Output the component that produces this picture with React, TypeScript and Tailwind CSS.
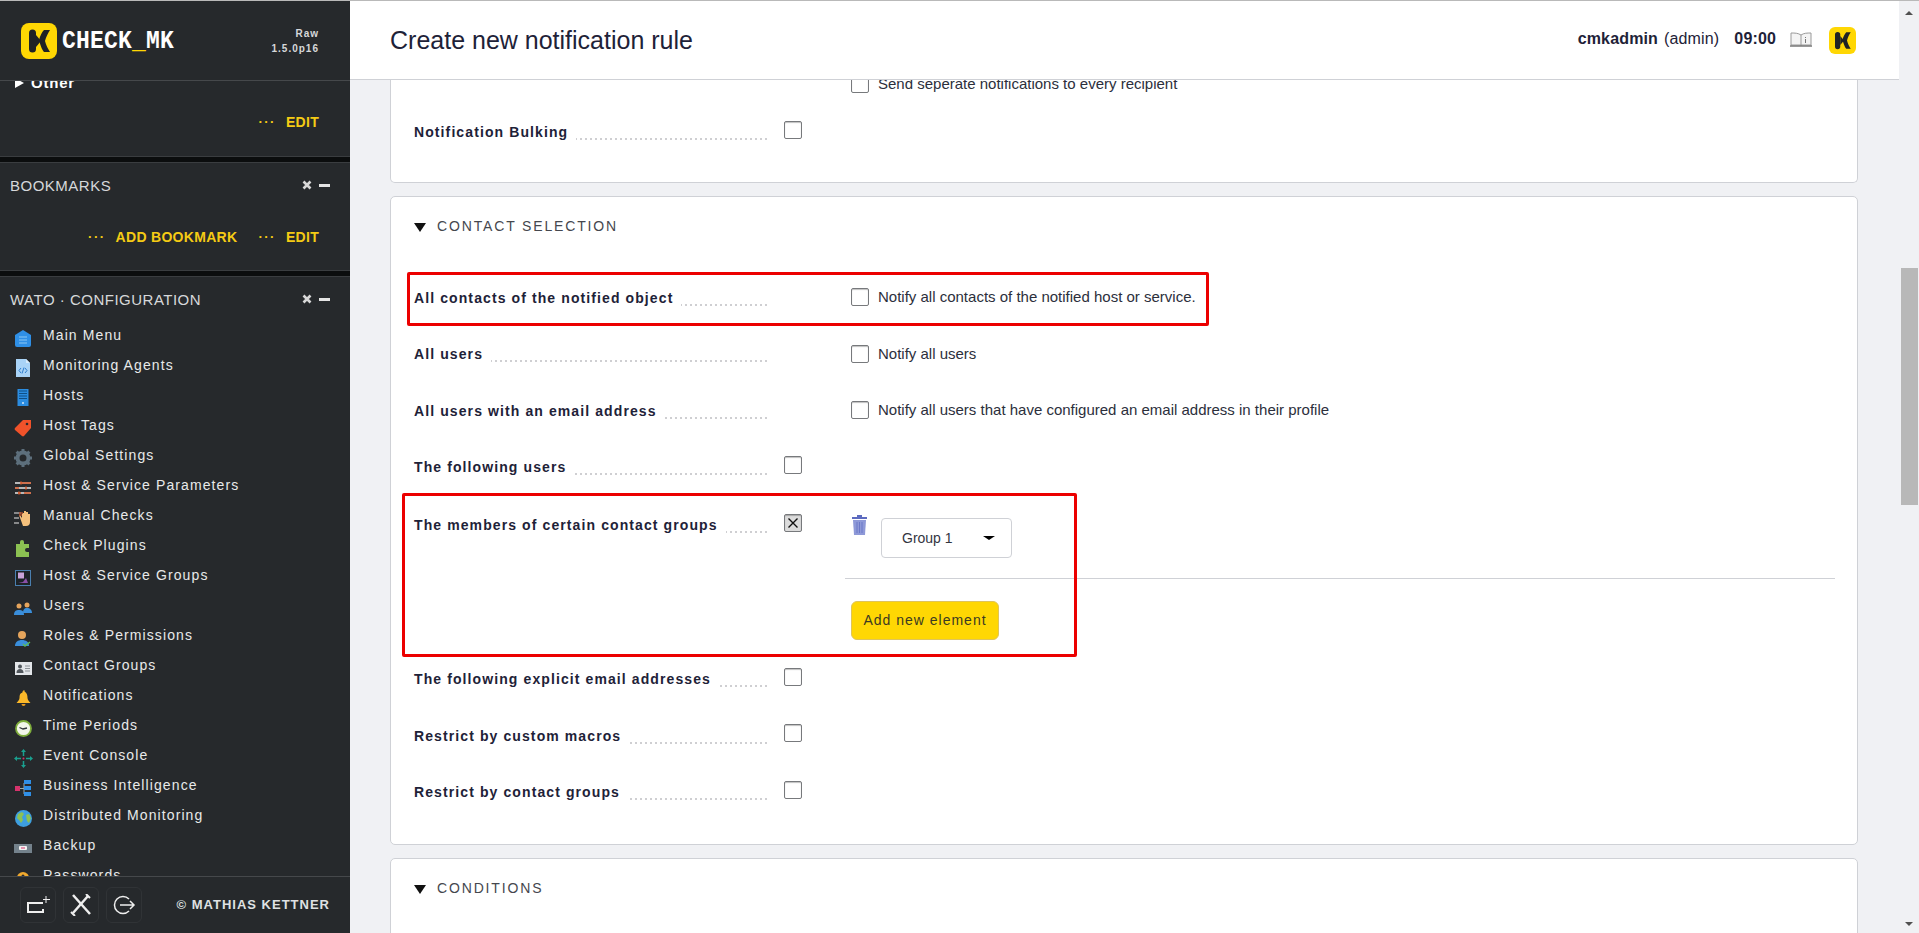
import type { ReactNode } from "react";

const sans = "font-['Liberation_Sans',Arial,sans-serif]";

function KLogo({ size }: { size: number }) {
  return (
    <svg width={size} height={size} viewBox="0 0 36 36" aria-hidden="true">
      <rect x="0" y="0" width="36" height="36" rx="8" fill="#ffd703" />
      <path d="M8 10a3.500 3.500 0 0 1 7 0v16a3.500 3.500 0 0 1-7 0z" fill="#1f2225" />
      <path d="M15 12l5 6-5 6z" fill="#1f2225" />
      <path d="M18 17c1-4 3-8 5-10h6c-2 3-4 7-5 11 1 4 3 8 5 11h-6c-2-2-4-8-5-12z" fill="#1f2225" />
    </svg>
  );
}

function IconMain() {
  return (
    <svg width="18" height="18" viewBox="0 0 18 18">
      <path d="M9 1 17 6v10a2 2 0 0 1-2 2H3a2 2 0 0 1-2-2V6z" fill="#2f8fe6" />
      <path d="M5 8h8M5 11h8M5 14h8" stroke="#8cc8f5" strokeWidth="1" />
    </svg>
  );
}
function IconAgents() {
  return (
    <svg width="18" height="20" viewBox="0 0 18 20">
      <path d="M2 1h10l4 4v14H2z" fill="#a9d3f7" />
      <path d="M12 1l4 4h-4z" fill="#d7ebfb" />
      <path d="M7 10l-2 2.500L7 15M11 10l2 2.500-2 2.500M10 9.500l-2 6" stroke="#2f7fd0" strokeWidth="1" fill="none" />
    </svg>
  );
}
function IconHosts() {
  return (
    <svg width="12" height="18" viewBox="0 0 12 18">
      <rect width="11" height="17" x="0.500" fill="#2b8ce0" />
      <path d="M2 2h8M2 4.500h8M2 7h8M2 9.500h8" stroke="#0f4f86" strokeWidth="1.200" />
      <circle cx="6" cy="14" r="1" fill="#cfe6fa" />
    </svg>
  );
}
function IconTag() {
  return (
    <svg width="18" height="18" viewBox="0 0 18 18">
      <path d="M9 1h8v8l-7 8a1.500 1.500 0 0 1-2 0L1 11a1.500 1.500 0 0 1 0-2z" fill="#f0522a" />
      <circle cx="13" cy="5" r="1.300" fill="#26292c" />
    </svg>
  );
}
function IconGear() {
  return (
    <svg width="18" height="18" viewBox="0 0 18 18">
      <circle cx="9" cy="9" r="5.500" fill="none" stroke="#5d6f7c" strokeWidth="4" />
      <path d="M9 0v3M9 15v3M0 9h3M15 9h3M2.600 2.600l2 2M13.400 13.400l2 2M15.400 2.600l-2 2M4.600 13.400l-2 2" stroke="#5d6f7c" strokeWidth="3" />
    </svg>
  );
}
function IconParams() {
  return (
    <svg width="16" height="14" viewBox="0 0 16 14">
      <path d="M0 2h16M0 7h16M0 12h16" stroke="#e8e8e8" strokeWidth="1.300" />
      <path d="M6 2h10M0 7h4M9 12h7M3 12h3" stroke="#d5582b" strokeWidth="1.300" />
      <path d="M6 0.500v3M11 5.500v3M4 10.500v3" stroke="#d5582b" strokeWidth="1.500" />
    </svg>
  );
}
function IconManual() {
  return (
    <svg width="18" height="17" viewBox="0 0 18 17">
      <path d="M0 3h7M0 8h5M0 13h5" stroke="#e8e8e8" strokeWidth="1.200" />
      <path d="M5 5h1l2 3V3h2V1h2v1h2v2h2v8a4 4 0 0 1-4 4H9z" fill="#f4c07c" />
      <path d="M5 3h4M5 5h3" stroke="#a8492a" strokeWidth="1.500" />
    </svg>
  );
}
function IconPlugin() {
  return (
    <svg width="14" height="17" viewBox="0 0 14 17">
      <path d="M0 4h4V2a2 2 0 0 1 4 0v2h5v4h-2a2 2 0 0 0 0 4h2v5H0z" fill="#8cc152" />
    </svg>
  );
}
function IconGroups() {
  return (
    <svg width="16" height="16" viewBox="0 0 16 16">
      <rect x="0.500" y="0.500" width="15" height="15" fill="#1d2327" stroke="#4a7fb0" />
      <rect x="3" y="2.500" width="6" height="6" fill="#c9a3d8" />
      <path d="M3 13l5-1 3-4 2 5z" fill="#8a4fa8" />
    </svg>
  );
}
function IconUsers() {
  return (
    <svg width="18" height="14" viewBox="0 0 18 14">
      <circle cx="5" cy="5" r="2.500" fill="#e5a45c" />
      <circle cx="13" cy="4" r="2.500" fill="#e5a45c" />
      <path d="M0 14c0-4 2-5 5-5s5 1 5 5z" fill="#3a8edb" />
      <path d="M9 12c0-3 1-5 4-5s5 2 5 5z" fill="#3a8edb" />
    </svg>
  );
}
function IconRoles() {
  return (
    <svg width="16" height="17" viewBox="0 0 16 17">
      <circle cx="7" cy="5" r="4" fill="#e5a45c" />
      <path d="M0 16c0-4 3-6 7-6s7 2 7 6z" fill="#3a8edb" />
      <path d="M8 14l2 2 5-4" stroke="#5cb85c" strokeWidth="1.500" fill="none" />
    </svg>
  );
}
function IconContact() {
  return (
    <svg width="17" height="13" viewBox="0 0 17 13">
      <rect width="17" height="13" fill="#e3e6ea" />
      <circle cx="5" cy="4.500" r="2" fill="#50565c" />
      <path d="M1.500 11c0-3 1.500-4 3.500-4s3.500 1 3.500 4z" fill="#50565c" />
      <path d="M10 4h5M10 6.500h5M10 9h5" stroke="#8a9096" />
    </svg>
  );
}
function IconBell() {
  return (
    <svg width="15" height="16" viewBox="0 0 15 16">
      <path d="M7.500 0a1 1 0 0 1 1 1.500C11 3 11.500 5 11.500 8c0 2 1.500 3 3 5H.5c1.500-2 3-3 3-5 0-3 .5-5 3-5.500a1 1 0 0 1 1-1.500z" fill="#fbb829" />
      <path d="M5.500 14h4a2 2 0 0 1-4 0z" fill="#e89a1c" />
    </svg>
  );
}
function IconClock() {
  return (
    <svg width="17" height="17" viewBox="0 0 17 17">
      <circle cx="8.500" cy="8.500" r="7.500" fill="#f3f6ea" stroke="#7fae3c" strokeWidth="1.800" />
      <path d="M4.500 7.500l3.500 1.500 4-1" stroke="#30343a" strokeWidth="1.300" fill="none" />
    </svg>
  );
}
function IconEvent() {
  return (
    <svg width="19" height="19" viewBox="0 0 19 19">
      <path d="M9.500 2v5M9.500 12v5M2 9.500h5M12 9.500h5" stroke="#1aa08f" strokeWidth="1.500" />
      <path d="M7 3l2.500-3L12 3zM7 16l2.500 3 2.500-3zM3 7 0 9.500 3 12zM16 7l3 2.500-3 2.500z" fill="#1aa08f" />
      <circle cx="9.500" cy="9.500" r="1" fill="#d6336c" />
    </svg>
  );
}
function IconBi() {
  return (
    <svg width="16" height="16" viewBox="0 0 16 16">
      <rect x="0" y="6" width="5" height="5" fill="#d6336c" />
      <path d="M5 8.500h4M9 3v11" stroke="#9aa" strokeWidth="1" />
      <rect x="9" y="0" width="7" height="4" fill="#2f8fe6" />
      <rect x="9" y="6" width="7" height="4" fill="#2f8fe6" />
      <rect x="9" y="12" width="7" height="4" fill="#2f8fe6" />
    </svg>
  );
}
function IconGlobe() {
  return (
    <svg width="17" height="17" viewBox="0 0 17 17">
      <circle cx="8.500" cy="8.500" r="8.500" fill="#3e9fe0" />
      <path d="M3 4l4-2 2 2-2 3 1 3-2 3-2-3-2-2zM11 5l3-1 2 4-2 5-2-2z" fill="#8cc152" />
    </svg>
  );
}
function IconBackup() {
  return (
    <svg width="18" height="9" viewBox="0 0 18 9">
      <rect width="18" height="9" fill="#74828c" />
      <rect x="5" y="2" width="8" height="4" rx="1" fill="#f2f2f2" />
      <rect x="7" y="3.500" width="4" height="1" fill="#d6336c" />
    </svg>
  );
}
function IconKey() {
  return (
    <svg width="14" height="14" viewBox="0 0 14 14">
      <circle cx="7" cy="7" r="6" fill="#f0a92e" />
      <circle cx="7" cy="5" r="1.500" fill="#26292c" />
    </svg>
  );
}

const menu: { label: string; icon: ReactNode }[] = [
  { label: "Main Menu", icon: <IconMain /> },
  { label: "Monitoring Agents", icon: <IconAgents /> },
  { label: "Hosts", icon: <IconHosts /> },
  { label: "Host Tags", icon: <IconTag /> },
  { label: "Global Settings", icon: <IconGear /> },
  { label: "Host & Service Parameters", icon: <IconParams /> },
  { label: "Manual Checks", icon: <IconManual /> },
  { label: "Check Plugins", icon: <IconPlugin /> },
  { label: "Host & Service Groups", icon: <IconGroups /> },
  { label: "Users", icon: <IconUsers /> },
  { label: "Roles & Permissions", icon: <IconRoles /> },
  { label: "Contact Groups", icon: <IconContact /> },
  { label: "Notifications", icon: <IconBell /> },
  { label: "Time Periods", icon: <IconClock /> },
  { label: "Event Console", icon: <IconEvent /> },
  { label: "Business Intelligence", icon: <IconBi /> },
  { label: "Distributed Monitoring", icon: <IconGlobe /> },
  { label: "Backup", icon: <IconBackup /> },
  { label: "Passwords", icon: <IconKey /> },
];

function SnapinLink({ label }: { label: string }) {
  return (
    <span className="flex items-center gap-[10px] text-[14px] leading-[16px] font-bold tracking-[0.3px] text-[#f5cb14]">
      <span className="text-[13px] font-bold tracking-[1.5px]">···</span>
      {label}
    </span>
  );
}

function SnapinTitle({ title }: { title: string }) {
  return (
    <div className="flex h-[46px] items-center justify-between pl-[10px] pr-[20px]">
      <span className="text-[15px] tracking-[0.5px] text-[#d6d8da]">{title}</span>
      <span className="flex -translate-y-[1px] items-center gap-[7px]">
        <svg width="10" height="10" viewBox="0 0 10 10">
          <path d="M1.500 1.500l7 7M8.500 1.500l-7 7" stroke="#d8d8d8" strokeWidth="2.600" />
        </svg>
        <span className="h-[3px] w-[11px] bg-[#e4e4e4]" />
      </span>
    </div>
  );
}

function Sidebar() {
  return (
    <aside className={`flex h-full w-[350px] shrink-0 flex-col bg-[#26292c] ${sans}`}>
      <div className="flex h-[80px] shrink-0 items-center justify-between border-b border-[#45484b] pl-[21px] pr-[31px]">
        <div className="flex items-center gap-[5px]">
          <KLogo size={36} />
          <span className="inline-block translate-y-[1px] scale-y-[1.1] font-['Liberation_Mono',monospace] text-[23px] leading-none font-bold tracking-[0.2px] text-white">
            CHECK<span className="text-[#ffd703]">_</span>MK
          </span>
        </div>
        <div className="text-right text-[10px] leading-[15px] font-bold tracking-[1px] text-[#d6d8da]">
          <div>Raw</div>
          <div>1.5.0p16</div>
        </div>
      </div>

      <div className="flex min-h-0 flex-1 flex-col overflow-hidden">
        <div className="h-[76px] shrink-0 overflow-hidden border-b border-[#3a3d40]">
          <div className="-mt-[6px] flex items-center gap-[7px] pl-[15px] text-[15px] leading-[16px] font-bold tracking-[0.8px] text-white">
            <span className="h-0 w-0 border-y-[5px] border-l-[9px] border-y-transparent border-l-white" />
            Other
          </div>
          <div className="mt-[23px] flex justify-end pr-[31px]">
            <SnapinLink label="EDIT" />
          </div>
        </div>
        <div className="h-[5px] shrink-0 bg-[#0b0d0e]" />

        <div className="h-[109px] shrink-0 border-y border-[#3a3d40]">
          <SnapinTitle title="BOOKMARKS" />
          <div className="mt-[20px] flex justify-end gap-[21px] pr-[31px]">
            <SnapinLink label="ADD BOOKMARK" />
            <SnapinLink label="EDIT" />
          </div>
        </div>
        <div className="h-[5px] shrink-0 bg-[#0b0d0e]" />

        <div className="border-t border-[#3a3d40]">
          <SnapinTitle title="WATO · CONFIGURATION" />
          <ul className="-mt-[3px]">
            {menu.map((item) => (
              <li key={item.label} className="flex h-[30px] items-center">
                <span className="flex w-[43px] shrink-0 translate-y-[3px] justify-center pl-[3px]">{item.icon}</span>
                <span className="text-[14px] tracking-[1.1px] text-[#e8e9ea]">{item.label}</span>
              </li>
            ))}
          </ul>
        </div>
      </div>

      <div className="flex h-[57px] shrink-0 items-center justify-between border-t border-[#45484b] pl-[20px] pr-[20px]">
        <div className="flex gap-[7px]">
          <button className="flex h-[36px] w-[36px] items-center justify-center rounded-[6px] border border-[#303336]">
            <svg width="24" height="20" viewBox="0 0 24 20" fill="none">
              <path d="M17 8H2v9h15v-3" stroke="#eee" strokeWidth="2" />
              <path d="M20 1v7M17 4.500h7" stroke="#eee" strokeWidth="1" />
            </svg>
          </button>
          <button className="flex h-[36px] w-[36px] items-center justify-center rounded-[6px] border border-[#303336]">
            <svg width="22" height="22" viewBox="0 0 22 22" fill="none">
              <path d="M3 1l17 19" stroke="#eee" strokeWidth="2.500" />
              <path d="M18 2 3 19" stroke="#eee" strokeWidth="2.500" />
              <path d="M1 18l4 4M16 0l4 4" stroke="#eee" strokeWidth="2" />
            </svg>
          </button>
          <button className="flex h-[36px] w-[36px] items-center justify-center rounded-[6px] border border-[#303336]">
            <svg width="24" height="22" viewBox="0 0 24 22" fill="none">
              <path d="M17 5a8.500 8.500 0 1 0 0 12" stroke="#eee" strokeWidth="1.500" />
              <path d="M8 11h14M18 7l4 4-4 4" stroke="#eee" strokeWidth="1.500" />
            </svg>
          </button>
        </div>
        <span className="text-[13px] font-bold tracking-[1px] text-[#dfe1e3]">© MATHIAS KETTNER</span>
      </div>
    </aside>
  );
}

function Checkbox({ checked }: { checked?: boolean }) {
  return (
    <span
      className={`flex h-[18px] w-[18px] shrink-0 items-center justify-center rounded-[2px] border border-[#77797c] shadow-[inset_0_1px_1px_rgba(0,0,0,0.25)] ${
        checked ? "bg-[#dcdcdc]" : "bg-white"
      }`}
    >
      {checked ? (
        <svg width="12" height="12" viewBox="0 0 12 12">
          <path d="M1.500 1.500l9 9M10.500 1.500l-9 9" stroke="#111" strokeWidth="1.400" />
        </svg>
      ) : null}
    </span>
  );
}

function RowLabel({ label }: { label: string }) {
  return (
    <div className="flex w-[356px] shrink-0 items-end whitespace-nowrap">
      <span className="shrink-0 text-[14px] font-bold tracking-[1.1px] text-[#1e2238]">{label}</span>
      <span className="mb-[3px] ml-[8px] mr-[3px] h-[2px] min-w-0 flex-1 bg-[repeating-linear-gradient(270deg,#cfcfd2_0,#cfcfd2_2px,transparent_2px,transparent_5px)]" />
    </div>
  );
}

function OptionRow({ label, text }: { label: string; text?: string }) {
  return (
    <div className="flex h-[56.5px] shrink-0 items-center">
      <RowLabel label={label} />
      {text ? (
        <div className="ml-[81px] flex -translate-y-[1px] items-center gap-[9px]">
          <Checkbox />
          <span className="text-[15px] text-[#2c2f3c]">{text}</span>
        </div>
      ) : (
        <div className="ml-[14px] -translate-y-[3px]">
          <Checkbox />
        </div>
      )}
    </div>
  );
}

function SectionTitle({ title }: { title: string }) {
  return (
    <div className="flex items-center gap-[11px]">
      <span className="h-0 w-0 translate-y-[1px] border-x-[6px] border-t-[9px] border-x-transparent border-t-[#111]" />
      <span className="text-[14px] tracking-[1.85px] text-[#45474e]">{title}</span>
    </div>
  );
}

export default function App() {
  return (
    <div className={`flex h-[933px] w-full overflow-hidden border-t border-[#b9b9b9] bg-[#f0f1f4] text-[#1e2238] ${sans}`}>
      <Sidebar />
      <main className="flex min-w-0 flex-1 flex-col">
        <header className="flex h-[79px] shrink-0 items-center justify-between border-b border-[#cfd1d6] bg-white pl-[40px] pr-[43px]">
          <h1 className="translate-y-[1px] text-[25px] font-normal text-[#1e2238]">Create new notification rule</h1>
          <div className="flex items-center text-[16px] tracking-[0.15px]">
            <span className="-translate-y-[1px] font-bold">cmkadmin</span>
            <span className="ml-[6px] -translate-y-[1px]">(admin)</span>
            <span className="ml-[15px] -translate-y-[1px] font-bold">09:00</span>
            <svg className="ml-[14px]" width="22" height="16" viewBox="0 0 22 16" fill="none">
              <path d="M1 1c4 0 7 0 10 2 3-2 6-2 10-2v12H1z" fill="#f4f4f4" stroke="#9a9a9a" />
              <path d="M11 3v11" stroke="#9a9a9a" />
              <path d="M0 14h22" stroke="#777" strokeWidth="1.500" />
              <path d="M15.500 5v1M15.500 7v4" stroke="#777" />
            </svg>
            <span className="ml-[17px] flex">
              <KLogo size={27} />
            </span>
          </div>
        </header>

        <div className="min-h-0 flex-1 overflow-hidden pl-[40px] pr-[41px]">
          <section className="h-[103px] overflow-hidden rounded-b-[5px] border-x border-b border-[#cfd1d6] bg-white pl-[23px]">
            <div className="flex -translate-y-[7px] items-center pl-[437px]">
              <Checkbox />
              <span className="ml-[9px] text-[15px] text-[#2c2f3c]">Send seperate notifications to every recipient</span>
            </div>
            <div className="mt-[2px]">
              <OptionRow label="Notification Bulking" />
            </div>
          </section>

          <section className="mt-[13px] h-[649px] rounded-[5px] border border-[#cfd1d6] bg-white pl-[23px] pr-[22px]">
            <div className="pt-[19px]">
              <SectionTitle title="CONTACT SELECTION" />
            </div>
            <div className="mt-[33px] flex flex-col">
              <OptionRow label="All contacts of the notified object" text="Notify all contacts of the notified host or service." />
              <OptionRow label="All users" text="Notify all users" />
              <OptionRow label="All users with an email address" text="Notify all users that have configured an email address in their profile" />
              <OptionRow label="The following users" />
              <div className="flex h-[155.5px] shrink-0 items-start pt-[11px]">
                <div className="pt-[8px]">
                  <RowLabel label="The members of certain contact groups" />
                </div>
                <div className="ml-[14px] pt-[7px]">
                  <Checkbox checked />
                </div>
                <div className="ml-[43px] min-w-0 flex-1">
                  <div className="flex items-start pl-[7px]">
                    <svg className="mt-[8px]" width="15" height="20" viewBox="0 0 15 20">
                      <path d="M5 0h5v2h5v2H0V2h5z" fill="#5d6bc0" />
                      <path d="M1 5h13l-1 15H2z" fill="#8e99d8" />
                      <path d="M5 7v11M7.500 7v11M10 7v11" stroke="#6b78c8" />
                    </svg>
                    <div className="ml-[14px] mt-[11px] flex h-[40px] w-[131px] items-center justify-between rounded-[4px] border border-[#cfd1d6] pl-[20px] pr-[16px] text-[14px] text-[#33353f]">
                      Group 1
                      <span className="h-0 w-0 border-x-[6px] border-t-[4px] border-x-transparent border-t-black" />
                    </div>
                  </div>
                  <div className="mt-[20px] border-t border-[#cfd1d6]" />
                  <button className="ml-[6px] mt-[22px] h-[39px] w-[148px] rounded-[6px] border border-[#dfc45a] bg-[#ffd703] text-[14px] tracking-[1px] text-[#3b3a22]">
                    Add new element
                  </button>
                </div>
              </div>
              <OptionRow label="The following explicit email addresses" />
              <OptionRow label="Restrict by custom macros" />
              <OptionRow label="Restrict by contact groups" />
            </div>
          </section>

          <section className="mt-[13px] h-[100px] rounded-t-[5px] border border-[#cfd1d6] bg-white pl-[23px] pt-[19px]">
            <SectionTitle title="CONDITIONS" />
          </section>
        </div>

        {/* red annotations on top of the screenshot */}
        <div className="pointer-events-none absolute left-[407px] top-[272px] h-[54px] w-[802px] rounded-[2px] border-[3px] border-[#ec0000]" />
        <div className="pointer-events-none absolute left-[402px] top-[493px] h-[164px] w-[675px] rounded-[2px] border-[3px] border-[#ec0000]" />
      </main>

      <div className="relative w-[20px] shrink-0 bg-[#f0f1f4]">
        <span className="absolute left-[6px] top-[10px] h-0 w-0 border-x-[4.5px] border-b-[4px] border-x-transparent border-b-[#505050]" />
        <span className="absolute bottom-[7px] left-[6px] h-0 w-0 border-x-[4.5px] border-t-[4px] border-x-transparent border-t-[#505050]" />
        <div className="absolute left-[2px] top-[267px] h-[237px] w-[17px] bg-[#b8b8b8]" />
      </div>
    </div>
  );
}
